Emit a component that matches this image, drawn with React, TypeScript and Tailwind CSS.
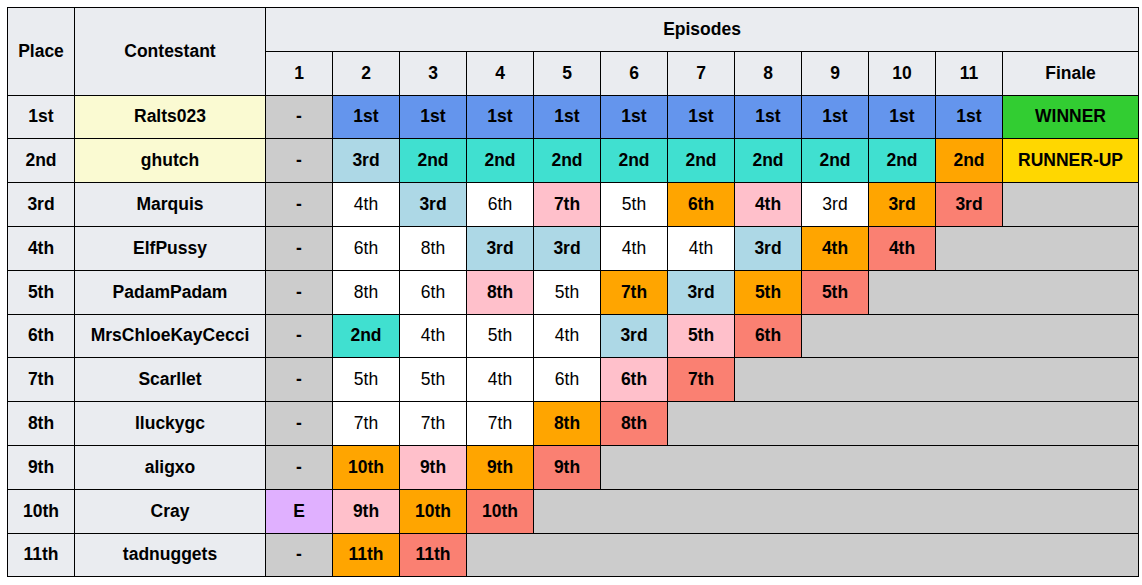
import React from 'react';

type Cell = { t: string; c: string; bold?: boolean; span?: number };

const C = {
  gray: 'bg-[#cccccc]',
  white: 'bg-white',
  blue: 'bg-[#6495ed]',
  turq: 'bg-[#40e0d0]',
  lblue: 'bg-[#add8e6]',
  orange: 'bg-[#ffa500]',
  pink: 'bg-[#ffc0cb]',
  salmon: 'bg-[#fa8072]',
  green: 'bg-[#32cd32]',
  gold: 'bg-[#ffd700]',
  mauve: 'bg-[#e0b0ff]',
};

const dash: Cell = { t: '-', c: C.gray, bold: true };
const w = (t: string): Cell => ({ t, c: C.white });
const b = (t: string, c: string): Cell => ({ t, c, bold: true });
const out = (span: number): Cell => ({ t: '', c: C.gray, span });

const rows: { place: string; name: string; yellow?: boolean; cells: Cell[] }[] = [
  {
    place: '1st',
    name: 'Ralts023',
    yellow: true,
    cells: [dash, ...Array.from({ length: 10 }, () => b('1st', C.blue)), b('WINNER', C.green)],
  },
  {
    place: '2nd',
    name: 'ghutch',
    yellow: true,
    cells: [
      dash,
      b('3rd', C.lblue),
      ...Array.from({ length: 8 }, () => b('2nd', C.turq)),
      b('2nd', C.orange),
      b('RUNNER-UP', C.gold),
    ],
  },
  {
    place: '3rd',
    name: 'Marquis',
    cells: [
      dash, w('4th'), b('3rd', C.lblue), w('6th'), b('7th', C.pink), w('5th'),
      b('6th', C.orange), b('4th', C.pink), w('3rd'), b('3rd', C.orange), b('3rd', C.salmon), out(1),
    ],
  },
  {
    place: '4th',
    name: 'ElfPussy',
    cells: [
      dash, w('6th'), w('8th'), b('3rd', C.lblue), b('3rd', C.lblue), w('4th'), w('4th'),
      b('3rd', C.lblue), b('4th', C.orange), b('4th', C.salmon), out(2),
    ],
  },
  {
    place: '5th',
    name: 'PadamPadam',
    cells: [
      dash, w('8th'), w('6th'), b('8th', C.pink), w('5th'), b('7th', C.orange),
      b('3rd', C.lblue), b('5th', C.orange), b('5th', C.salmon), out(3),
    ],
  },
  {
    place: '6th',
    name: 'MrsChloeKayCecci',
    cells: [
      dash, b('2nd', C.turq), w('4th'), w('5th'), w('4th'), b('3rd', C.lblue),
      b('5th', C.pink), b('6th', C.salmon), out(4),
    ],
  },
  {
    place: '7th',
    name: 'Scarllet',
    cells: [dash, w('5th'), w('5th'), w('4th'), w('6th'), b('6th', C.pink), b('7th', C.salmon), out(5)],
  },
  {
    place: '8th',
    name: 'lluckygc',
    cells: [dash, w('7th'), w('7th'), w('7th'), b('8th', C.orange), b('8th', C.salmon), out(6)],
  },
  {
    place: '9th',
    name: 'aligxo',
    cells: [dash, b('10th', C.orange), b('9th', C.pink), b('9th', C.orange), b('9th', C.salmon), out(7)],
  },
  {
    place: '10th',
    name: 'Cray',
    cells: [b('E', C.mauve), b('9th', C.pink), b('10th', C.orange), b('10th', C.salmon), out(8)],
  },
  {
    place: '11th',
    name: 'tadnuggets',
    cells: [dash, b('11th', C.orange), b('11th', C.salmon), out(9)],
  },
];

const th = 'border border-black bg-[#eaecf0] font-bold text-center';
const td = 'border border-black text-center';

export default function App() {
  return (
    <div className="min-h-screen bg-white p-[7px] font-['Liberation_Sans',Arial,sans-serif] text-[17.5px] leading-[1.2] text-black">
      <table className="table-fixed border-collapse w-[1131px]">
        <colgroup>
          <col className="w-[67px]" />
          <col className="w-[191px]" />
          {Array.from({ length: 11 }, (_, i) => (
            <col key={i} className="w-[67px]" />
          ))}
          <col className="w-[136px]" />
        </colgroup>
        <thead>
          <tr className="h-[43.8px]">
            <th rowSpan={2} className={th}>Place</th>
            <th rowSpan={2} className={th}>Contestant</th>
            <th colSpan={12} className={th}>Episodes</th>
          </tr>
          <tr className="h-[43.8px]">
            {Array.from({ length: 11 }, (_, i) => (
              <th key={i} className={th}>{i + 1}</th>
            ))}
            <th className={th}>Finale</th>
          </tr>
        </thead>
        <tbody>
          {rows.map((r) => (
            <tr key={r.place} className="h-[43.8px]">
              <th className={th}>{r.place}</th>
              <th className={`${th} ${r.yellow ? 'bg-[#fafad2]' : ''}`}>{r.name}</th>
              {r.cells.map((c, i) => (
                <td key={i} colSpan={c.span} className={`${td} ${c.c} ${c.bold ? 'font-bold' : ''}`}>
                  {c.t}
                </td>
              ))}
            </tr>
          ))}
        </tbody>
      </table>
    </div>
  );
}
